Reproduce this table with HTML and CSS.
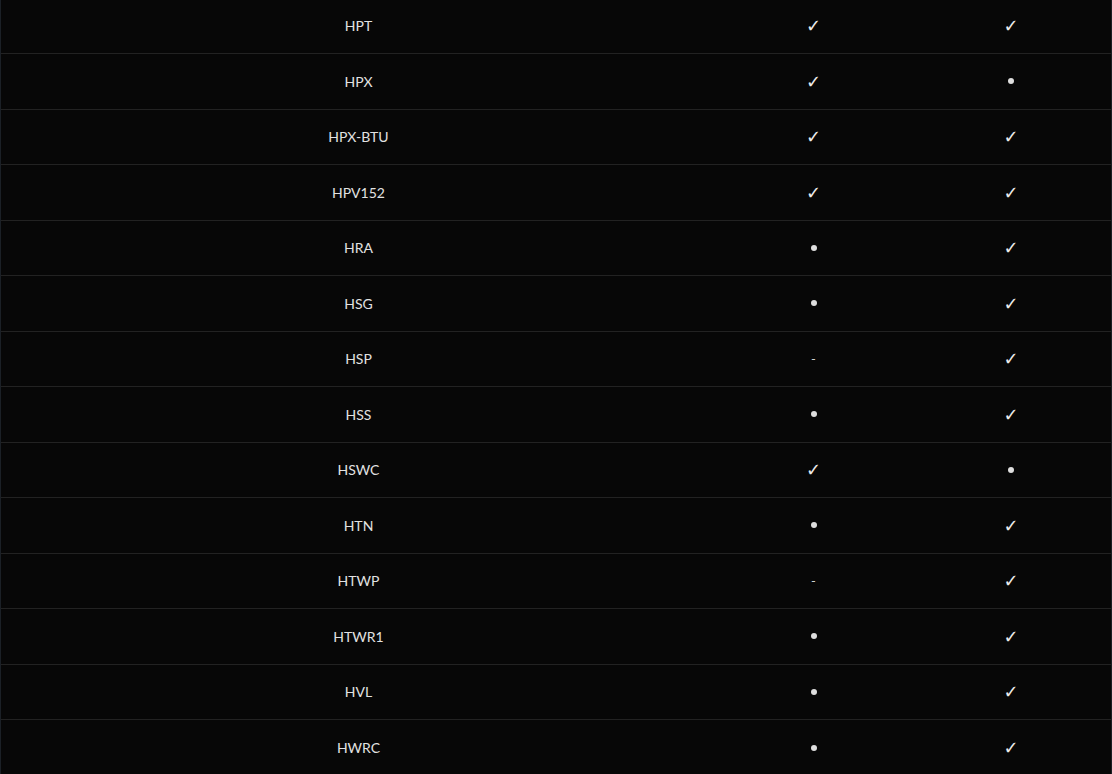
FILE: index.html
```html
<!DOCTYPE html>
<html>
<head>
<meta charset="utf-8">
<link rel="stylesheet" href="styles.css">
</head>
<body>
<div class="table">
  <div class="row"><div class="cell name">HPT</div><div class="cell check">✓</div><div class="cell check">✓</div></div>
  <div class="row"><div class="cell name">HPX</div><div class="cell check">✓</div><div class="cell"><span class="dot"></span></div></div>
  <div class="row"><div class="cell name">HPX-BTU</div><div class="cell check">✓</div><div class="cell check">✓</div></div>
  <div class="row"><div class="cell name">HPV152</div><div class="cell check">✓</div><div class="cell check">✓</div></div>
  <div class="row"><div class="cell name">HRA</div><div class="cell"><span class="dot"></span></div><div class="cell check">✓</div></div>
  <div class="row"><div class="cell name">HSG</div><div class="cell"><span class="dot"></span></div><div class="cell check">✓</div></div>
  <div class="row"><div class="cell name">HSP</div><div class="cell dash">-</div><div class="cell check">✓</div></div>
  <div class="row"><div class="cell name">HSS</div><div class="cell"><span class="dot"></span></div><div class="cell check">✓</div></div>
  <div class="row"><div class="cell name">HSWC</div><div class="cell check">✓</div><div class="cell"><span class="dot"></span></div></div>
  <div class="row"><div class="cell name">HTN</div><div class="cell"><span class="dot"></span></div><div class="cell check">✓</div></div>
  <div class="row"><div class="cell name">HTWP</div><div class="cell dash">-</div><div class="cell check">✓</div></div>
  <div class="row"><div class="cell name">HTWR1</div><div class="cell"><span class="dot"></span></div><div class="cell check">✓</div></div>
  <div class="row"><div class="cell name">HVL</div><div class="cell"><span class="dot"></span></div><div class="cell check">✓</div></div>
  <div class="row"><div class="cell name">HWRC</div><div class="cell"><span class="dot"></span></div><div class="cell check">✓</div></div>
</div>
</body>
</html>
```
FILE: styles.css
```css
html, body {
  margin: 0;
  padding: 0;
  background: #070707;
  overflow: hidden;
}
body {
  font-family: "Century Gothic", "Lato", "DejaVu Sans", sans-serif;
  font-size: 14px;
  font-weight: 400;
  color: #e2e2e2;
}
.table {
  margin-top: -1.5px;
  border-left: 1px solid #1b2026;
  border-right: 1px solid #1b2026;
}
.row {
  display: grid;
  grid-template-columns: 715px 195px 1fr;
  height: 55.5px;
  box-sizing: border-box;
  border-bottom: 1px solid #222;
}
.row:last-child {
  border-bottom: none;
}
.cell {
  display: flex;
  align-items: center;
  justify-content: center;
}
.check {
  font-family: "DejaVu Sans", sans-serif;
  font-size: 18px;
  font-weight: 700;
  color: #ececec;
}
.dot {
  width: 6px;
  height: 6px;
  border-radius: 50%;
  background: #dedede;
}
.dash {
  font-family: "DejaVu Sans", sans-serif;
  font-size: 12px;
  color: #cfcfcf;
}
```
